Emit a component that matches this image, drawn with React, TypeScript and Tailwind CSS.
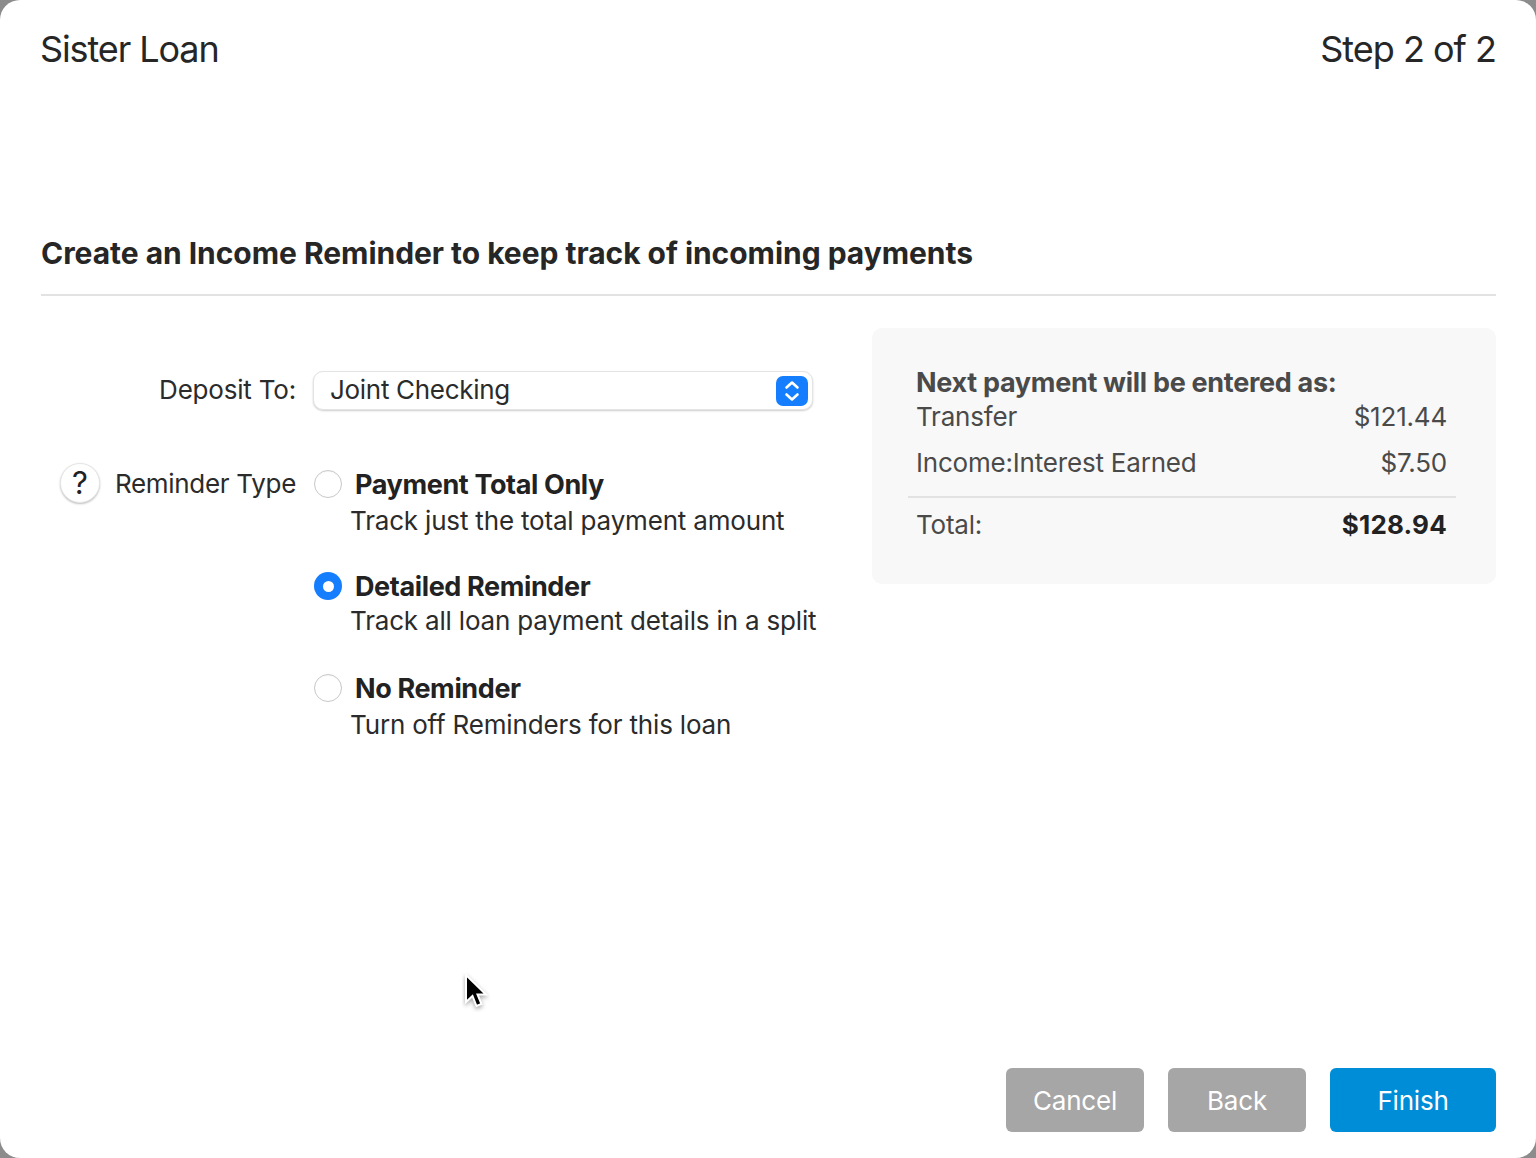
import React from "react";

type ReminderOption = {
  title: string;
  hint: string;
  selected?: boolean;
};

const REMINDER_OPTIONS: ReminderOption[] = [
  { title: "Payment Total Only", hint: "Track just the total payment amount" },
  { title: "Detailed Reminder", hint: "Track all loan payment details in a split", selected: true },
  { title: "No Reminder", hint: "Turn off Reminders for this loan" },
];

function Radio({ selected }: { selected?: boolean }) {
  if (selected) {
    return (
      <span className="flex size-[28px] shrink-0 items-center justify-center rounded-full bg-[#147eff]">
        <span className="size-[11px] rounded-full bg-white" />
      </span>
    );
  }
  return <span className="size-[28px] shrink-0 rounded-full border border-[#c8c8c8] bg-white shadow-[inset_0_1px_1px_rgba(0,0,0,0.04)]" />;
}

function ReminderRow({ option }: { option: ReminderOption }) {
  return (
    <div className="h-[102px]">
      <div className="flex h-[28px] items-center gap-[13px]">
        <Radio selected={option.selected} />
        <span className="mt-[3px] text-[27px] font-bold tracking-[-0.38px] text-[#222]">{option.title}</span>
      </div>
      <div className={(option.selected ? "mt-[5px]" : "mt-[7px]") + " pl-[36px] text-[26px] leading-[32px] tracking-[-0.18px] whitespace-nowrap text-[#2b2b2b]"}>
        {option.hint}
      </div>
    </div>
  );
}

function Stepper() {
  return (
    <span className="mt-[2px] flex h-[30px] w-[32px] items-center justify-center rounded-[7px] bg-[#147eff]">
      <svg width="18" height="26" viewBox="0 0 18 26" fill="none" stroke="white" strokeWidth="2.6" strokeLinecap="round" strokeLinejoin="round">
        <path d="M3.5 9.5 9 4.5 14.5 9.5" />
        <path d="M3.5 16.5 9 21.5 14.5 16.5" />
      </svg>
    </span>
  );
}

function AmountRow({ label, amount, bold }: { label: string; amount: string; bold?: boolean }) {
  return (
    <div className="flex items-center justify-between text-[26px] tracking-[-0.2px] text-[#4a4a4a]">
      <span>{label}</span>
      <span className={bold ? "font-bold tracking-[0.2px] text-[#222]" : ""}>{amount}</span>
    </div>
  );
}

function Cursor() {
  return (
    <svg className="absolute left-[462px] top-[972px]" width="28" height="40" viewBox="0 0 28 40">
      <path d="M4 3v27l6.5-6 4 10 5-2-4-9.5H24z" fill="black" stroke="white" strokeWidth="2" style={{ filter: "drop-shadow(0 2px 2px rgba(0,0,0,0.35))" }} />
    </svg>
  );
}

export default function App() {
  return (
    <div className="relative h-[1158px] w-[1536px] overflow-hidden bg-[#8c8c8c] font-['Inter',sans-serif]">
      <div className="flex h-full flex-col rounded-[20px] bg-white px-[40px] pb-[26px]">
        <div className="flex items-center justify-between pt-[26px] text-[36px] leading-[46px] tracking-[-1px] text-[#262626]">
          <span className="tracking-[-1.1px]">Sister Loan</span>
          <span>Step 2 of 2</span>
        </div>

        <h1 className="mt-[161px] ml-[1px] border-b-2 border-[#e2e2e2] pb-[21px] text-[30px] leading-[40px] font-bold tracking-[-0.04px] text-[#262626]">
          Create an Income Reminder to keep track of incoming payments
        </h1>

        <div className="mt-[32px] flex flex-1 justify-between">
          <div className="w-[800px] pt-[42px]">
            <div className="flex h-[40px] items-center">
              <div className="mb-[2px] w-[256px] text-right text-[26px] tracking-[-0.2px] text-[#2b2b2b]">Deposit To:</div>
              <div className="ml-[17px] flex h-[39px] w-[500px] items-center justify-between rounded-[10px] border border-[#e4e4e4] bg-white pr-[4px] pl-[16px] text-[26px] tracking-[-0.3px] text-[#2b2b2b] shadow-[0_1px_2px_rgba(0,0,0,0.2)]">
                <span className="mb-[2px]">Joint Checking</span>
                <Stepper />
              </div>
            </div>

            <div className="mt-[53px] flex items-start">
              <div className="flex w-[256px] items-center justify-end">
                <span className="mr-[15px] flex size-[40px] items-center justify-center rounded-full border border-[#e6e6e6] bg-white text-[31px] text-[#222] shadow-[0_1px_2px_rgba(0,0,0,0.25)]">?</span>
                <span className="text-[26px] tracking-[-0.3px] text-[#2b2b2b]">Reminder Type</span>
              </div>
              <div className="mt-[7px] ml-[18px] flex-1">
                {REMINDER_OPTIONS.map((option) => (
                  <ReminderRow key={option.title} option={option} />
                ))}
              </div>
            </div>
          </div>

          <div className="h-[256px] w-[624px] rounded-[10px] bg-[#f8f8f8] pt-[38px] pr-[40px] pl-[36px]">
            <div className="pr-[9px] pl-[8px] text-[27px] leading-[34px] font-bold tracking-[-0.3px] text-[#4a4a4a]">Next payment will be entered as:</div>
            <div className="mt-[1px] flex flex-col gap-[14px] pr-[9px] pl-[8px] leading-[32px]">
              <AmountRow label="Transfer" amount="$121.44" />
              <AmountRow label="Income:Interest Earned" amount="$7.50" />
            </div>
            <div className="mt-[17px] border-t-2 border-[#e2e2e2] pt-[7px] pr-[9px] pl-[8px]">
              <AmountRow label="Total:" amount="$128.94" bold />
            </div>
          </div>
        </div>

        <div className="flex justify-end gap-[24px]">
          <button className="h-[64px] w-[138px] rounded-[6px] bg-[#a6a6a6] pt-[1px] text-[26px] tracking-[-0.2px] text-white">Cancel</button>
          <button className="h-[64px] w-[138px] rounded-[6px] bg-[#a6a6a6] pt-[1px] text-[26px] tracking-[-0.2px] text-white">Back</button>
          <button className="h-[64px] w-[166px] rounded-[6px] bg-[#008dd7] pt-[1px] text-[26px] tracking-[-0.2px] text-white">Finish</button>
        </div>
      </div>
      <Cursor />
    </div>
  );
}
